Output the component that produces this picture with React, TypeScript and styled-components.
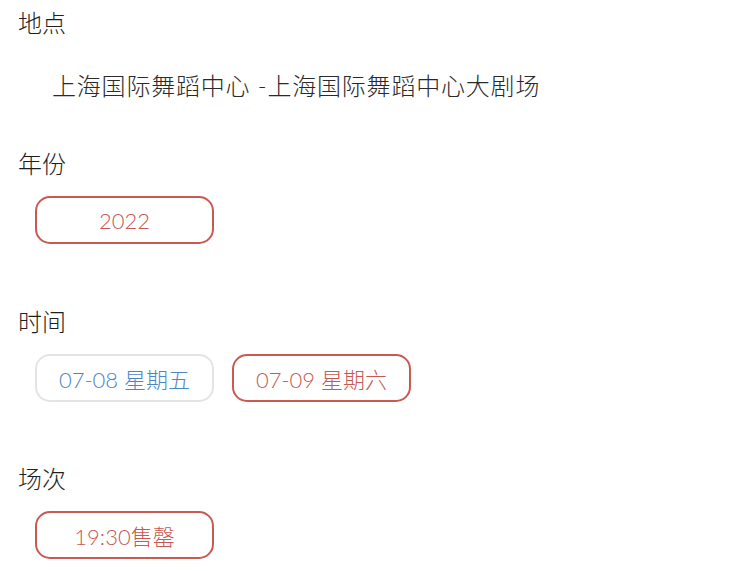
import styled, { createGlobalStyle } from "styled-components";

const GlobalStyle = createGlobalStyle`
  html, body {
    margin: 0;
    padding: 0;
    background: #ffffff;
  }
  body {
    font-family: "Lato", "Noto Sans CJK SC", sans-serif;
    color: #222;
  }
`;

const Page = styled.div`
  padding: 7px 0 0 18px;
  width: 750px;
  box-sizing: border-box;
`;

const Section = styled.section<{ $gap: number }>`
  margin-top: ${(p) => p.$gap}px;
  &:first-child {
    margin-top: 0;
  }
`;

const Label = styled.div`
  font-size: 24px;
  line-height: 32px;
  font-weight: 300;
  color: #1f1f1f;
`;

const Place = styled.div`
  margin-top: 31px;
  padding-left: 34px;
  font-size: 24px;
  line-height: 32px;
  font-weight: 300;
  letter-spacing: 0.8px;
  color: #2a2a2a;
`;

const ChipRow = styled.div`
  display: flex;
  gap: 18px;
  margin-top: 16px;
  padding-left: 17px;
`;

const Chip = styled.div<{ $active?: boolean }>`
  width: 179px;
  height: 48px;
  box-sizing: border-box;
  display: flex;
  align-items: center;
  justify-content: center;
  border-radius: 15px;
  border: ${(p) => (p.$active ? "2px solid #c85a52" : "2px solid #e4e4e4")};
  color: ${(p) => (p.$active ? "#c65a52" : "#4d86c6")};
  font-size: 22px;
  font-weight: 300;
`;

export default function App() {
  const dates = [
    { id: 1, text: "07-08 星期五", active: false },
    { id: 2, text: "07-09 星期六", active: true },
  ];

  return (
    <>
      <GlobalStyle />
      <Page>
        <Section $gap={0}>
          <Label>地点</Label>
          <Place>上海国际舞蹈中心 -上海国际舞蹈中心大剧场</Place>
        </Section>

        <Section $gap={46}>
          <Label>年份</Label>
          <ChipRow>
            <Chip $active>2022</Chip>
          </ChipRow>
        </Section>

        <Section $gap={62}>
          <Label>时间</Label>
          <ChipRow>
            {dates.map((d) => (
              <Chip key={d.id} $active={d.active}>
                {d.text}
              </Chip>
            ))}
          </ChipRow>
        </Section>

        <Section $gap={61}>
          <Label>场次</Label>
          <ChipRow>
            <Chip $active>19:30售罄</Chip>
          </ChipRow>
        </Section>
      </Page>
    </>
  );
}
